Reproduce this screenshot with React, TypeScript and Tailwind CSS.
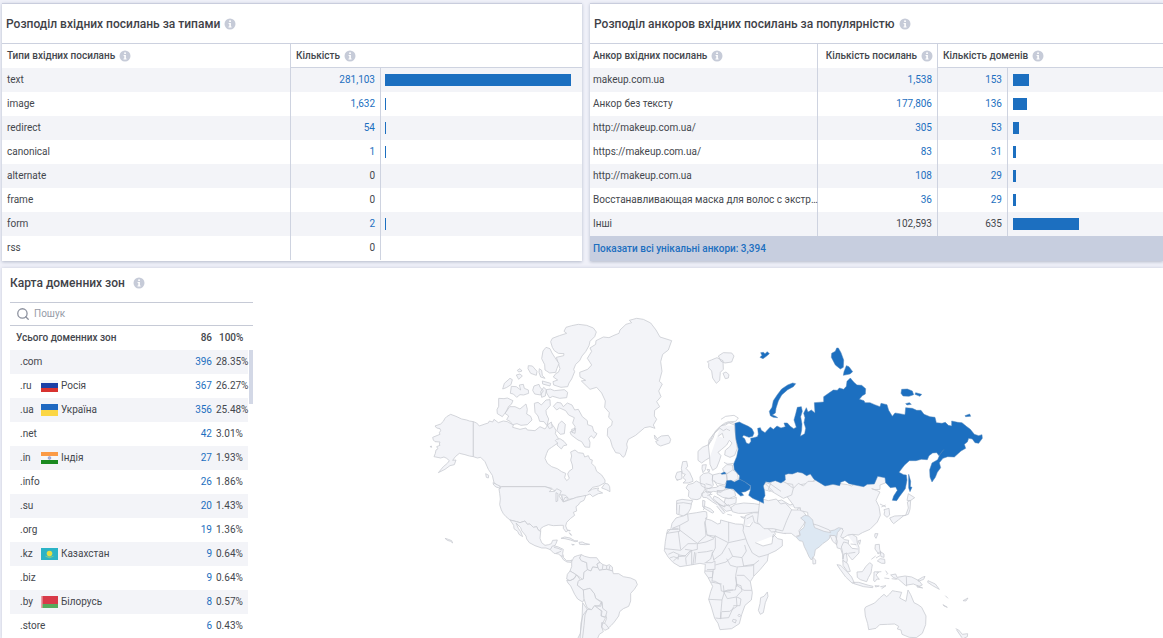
import { Search } from 'lucide-react';
import type { ReactNode } from 'react';

type LinkType = { name: string; count: number };
type Anchor = { name: string; links: number; domains: number; plain?: boolean };
type Zone = { zone: string; count: number; share: string; country?: string; flag?: string };

const linkTypes: LinkType[] = [
  { name: 'text', count: 281103 },
  { name: 'image', count: 1632 },
  { name: 'redirect', count: 54 },
  { name: 'canonical', count: 1 },
  { name: 'alternate', count: 0 },
  { name: 'frame', count: 0 },
  { name: 'form', count: 2 },
  { name: 'rss', count: 0 },
];

const anchors: Anchor[] = [
  { name: 'makeup.com.ua', links: 1538, domains: 153 },
  { name: 'Анкор без тексту', links: 177806, domains: 136 },
  { name: 'http://makeup.com.ua/', links: 305, domains: 53 },
  { name: 'https://makeup.com.ua/', links: 83, domains: 31 },
  { name: 'http://makeup.com.ua', links: 108, domains: 29 },
  { name: 'Восстанавливающая маска для волос с экстр…', links: 36, domains: 29 },
  { name: 'Інші', links: 102593, domains: 635, plain: true },
];

const zones: Zone[] = [
  { zone: '.com', count: 396, share: '28.35%' },
  { zone: '.ru', count: 367, share: '26.27%', country: 'Росія', flag: 'ru' },
  { zone: '.ua', count: 356, share: '25.48%', country: 'Україна', flag: 'ua' },
  { zone: '.net', count: 42, share: '3.01%' },
  { zone: '.in', count: 27, share: '1.93%', country: 'Індія', flag: 'in' },
  { zone: '.info', count: 26, share: '1.86%' },
  { zone: '.su', count: 20, share: '1.43%' },
  { zone: '.org', count: 19, share: '1.36%' },
  { zone: '.kz', count: 9, share: '0.64%', country: 'Казахстан', flag: 'kz' },
  { zone: '.biz', count: 9, share: '0.64%' },
  { zone: '.by', count: 8, share: '0.57%', country: 'Білорусь', flag: 'by' },
  { zone: '.store', count: 6, share: '0.43%' },
];

const BAR_SCALE = 1443;
const fmt = (n: number) => n.toLocaleString('en-US');

function Info() {
  return (
    <svg viewBox="0 0 12 12" className="h-3 w-3 shrink-0" aria-hidden="true">
      <circle cx="6" cy="6" r="5.5" fill="#c6cbd8" />
      <rect x="5.2" y="2.4" width="1.7" height="1.6" fill="#fff" />
      <path d="M4.6 5h2.3v3.6h.7v.9H4.5v-.9h.8V5.9h-.7z" fill="#fff" />
    </svg>
  );
}

function Flag({ code }: { code: string }) {
  return (
    <svg viewBox="0 0 17 12" className="h-3 w-[17px] shrink-0" aria-hidden="true">
      {code === 'ru' && (
        <>
          <rect width="17" height="4" fill="#f4f5f8" />
          <rect y="3" width="17" height="5" fill="#1b3fa6" />
          <rect y="8" width="17" height="4" fill="#d8322f" />
        </>
      )}
      {code === 'ua' && (
        <>
          <rect width="17" height="6" fill="#1f69c1" />
          <rect y="6" width="17" height="6" fill="#fbd644" />
        </>
      )}
      {code === 'in' && (
        <>
          <rect width="17" height="12" fill="#f6f7f8" />
          <rect width="17" height="4" fill="#fb9b46" />
          <rect y="8" width="17" height="4" fill="#1b8a20" />
          <circle cx="8.5" cy="6" r="1.4" fill="#a9b3dc" stroke="#7583c4" strokeWidth=".5" />
        </>
      )}
      {code === 'kz' && (
        <>
          <rect width="17" height="12" fill="#2bb3c6" />
          <circle cx="8.5" cy="5.6" r="2.8" fill="#e3dd45" />
          <path d="M4.5 8.2q4 3 8 0" fill="none" stroke="#9ccf72" strokeWidth=".8" />
        </>
      )}
      {code === 'by' && (
        <>
          <rect width="17" height="8" fill="#d83a49" />
          <rect y="8" width="17" height="4" fill="#55ab5c" />
          <rect width="1.6" height="12" fill="#e9a2a6" />
        </>
      )}
    </svg>
  );
}

function CardTitle({ children }: { children: ReactNode }) {
  return (
    <h2 className="flex h-10 items-center gap-1 border-b border-[#ccd1df] pl-1 text-[12px] font-medium text-[#3f4248]">
      {children}
      <Info />
    </h2>
  );
}

const Bar = ({ share }: { share: number }) => (
  <div className="h-3 min-w-px bg-[#1c6fc0]" style={{ width: `${share}%` }} />
);

const LABEL = 'flex items-center gap-1';
const LINE = 'border-l border-[#ced3e0]';

function LinkTypesCard() {
  return (
    <section className="border-t border-[#c9cddd] bg-white shadow-[0_1px_3px_#b4bacb]">
      <CardTitle>Розподіл вхідних посилань за типами</CardTitle>
      <table className="w-full table-fixed border-separate border-spacing-0">
        <colgroup>
          <col className="w-[288px]" />
          <col className="w-[90px]" />
          <col />
        </colgroup>
        <thead>
          <tr className="h-6 text-left">
            <th className="p-0 pl-[5px] font-medium">
              <span className={LABEL}>Типи вхідних посилань <Info /></span>
            </th>
            <th colSpan={2} className={`${LINE} border-b p-0 pl-[5px] font-medium`}>
              <span className={LABEL}>Кількість <Info /></span>
            </th>
          </tr>
        </thead>
        <tbody>
          {linkTypes.map((row) => (
            <tr key={row.name} className="h-6 odd:bg-[#f3f4f8]">
              <td className="p-0 pl-[5px]">{row.name}</td>
              <td className={`${LINE} p-0 pr-[5px] text-right`}>
                {row.count ? <a href="#links" className="text-[#1c6fc0]">{fmt(row.count)}</a> : '0'}
              </td>
              <td className={`${LINE} p-0 pr-[11px] pl-1`}>
                {row.count > 0 && <Bar share={(row.count / 281103) * 100} />}
              </td>
            </tr>
          ))}
        </tbody>
      </table>
    </section>
  );
}

function AnchorsCard() {
  return (
    <section className="border-t border-[#c9cddd] bg-white shadow-[0_1px_3px_#b4bacb]">
      <CardTitle>Розподіл анкоров вхідних посилань за популярністю</CardTitle>
      <table className="w-full table-fixed border-separate border-spacing-0">
        <colgroup>
          <col className="w-[227px]" />
          <col className="w-[120px]" />
          <col className="w-[70px]" />
          <col />
        </colgroup>
        <thead>
          <tr className="h-6 text-left">
            <th className="p-0 pl-[3px] font-medium">
              <span className={LABEL}>Анкор вхідних посилань <Info /></span>
            </th>
            <th className={`${LINE} p-0 pr-1 font-medium`}>
              <span className={`${LABEL} justify-end`}>Кількість посилань <Info /></span>
            </th>
            <th colSpan={2} className={`${LINE} border-b p-0 pl-[5px] font-medium`}>
              <span className={LABEL}>Кількість доменів <Info /></span>
            </th>
          </tr>
        </thead>
        <tbody>
          {anchors.map((row) => (
            <tr key={row.name} className="h-6 odd:bg-[#f3f4f8]">
              <td className="p-0 pl-[3px] whitespace-nowrap">{row.name}</td>
              <td className={`${LINE} p-0 pr-[5px] text-right`}>
                {row.plain ? fmt(row.links) : <a href="#links" className="text-[#1c6fc0]">{fmt(row.links)}</a>}
              </td>
              <td className={`${LINE} p-0 pr-[5px] text-right`}>
                {row.plain ? row.domains : <a href="#domains" className="text-[#1c6fc0]">{row.domains}</a>}
              </td>
              <td className={`${LINE} p-0 pl-[5px]`}>
                <Bar share={(row.domains / BAR_SCALE) * 100} />
              </td>
            </tr>
          ))}
        </tbody>
      </table>
      <a href="#anchors" className="flex h-[25px] items-center bg-[#c7cedf] pl-[3px] font-medium text-[#1c6fc0]">
        Показати всі унікальні анкори: 3,394
      </a>
    </section>
  );
}

/* Outlines are drawn on a grid three times finer than the page and grouped by region. */
const americas = [
  'M160 335L148 333 140 330 125 327 108 319 92 313 80 320 75 325 70 334 62 342 45 348 50 354 60 356 62 362 58 368 60 373 38 382 40 390 45 395 60 396 58 402 60 406 50 410 54 416 48 420 46 430 42 440 62 444 72 441 80 445 88 452 82 460 70 470 55 488 75 478 90 467 103 464 108 450 98 451 106 440 118 430 135 434 148 438 160 440Z',
  'M160 335L170 339 178 348 195 342 205 339 208 333 218 336 222 328 235 338 250 333 262 335 280 345 278 352 300 358 318 354 322 360 345 362 360 350 375 357 385 343 395 342 403 352 408 362 406 371 415 385 412 400 395 412 385 419 380 430 375 445 382 460 395 470 412 476 425 485 437 490 434 503 440 512 448 505 443 492 447 484 458 476 457 465 452 450 455 438 452 426 465 420 475 428 490 430 494 441 505 437 510 448 517 450 515 460 525 470 530 484 545 495 555 510 555 518 537 528 518 532 505 545 518 537 536 534 533 541 548 549 535 551 518 560 510 552 500 556 488 560 470 562 460 566 445 568 430 576 425 560 415 545 400 540 395 535 375 530 245 530 233 527 222 518 217 496 205 478 195 455 182 442 172 444 160 440Z',
  'M245 530L375 530 395 537 388 545 404 544 410 536 424 543 417 558 430 576 470 562 498 556 492 571 480 577 475 585 468 590 470 603 460 607 464 616 452 625 440 637 437 648 443 663 438 666 430 655 430 646 420 646 400 647 385 644 370 650 362 656 362 665 354 659 350 650 340 652 330 642 322 643 315 633 300 638 290 635 270 630 258 620 250 611 244 600 239 584 241 567 239 550 237 537Z',
  'M270 630L290 635 300 638 315 633 322 643 330 642 340 652 350 650 354 659 362 665 360 685 365 698 375 706 386 704 394 701 398 691 412 690 408 701 404 707 397 711 391 719 378 714 365 714 345 707 328 698 320 687 318 678 305 662 302 653 288 639 295 655 302 665 308 680 297 673 293 664 282 656 281 646Z',
  'M391 719L397 708 405 708 415 711 430 718 428 730 430 742 440 752 450 752 456 750 453 757 441 756 430 749 423 738 415 732 402 730Z M402 712l12 3 12 5M408 730l15-6M423 738h8',
  'M423 685l11-4 16 3 14 8 10 1-8 2-15-5-16-4zM477 697l10-1 8 4 14 3-13 1-17-1zM455 703l8 1-6 1zM443 660l8 2-4 1zM448 668l7 8-3-1zM75 685l10 3 10 4 3 7-6-5-10-3z',
  'M455 755L462 741 472 737 484 734 479 744 484 752 500 758 503 780 492 787 490 810 470 795 450 783 455 770Z',
  'M484 734L479 744 484 752 500 758 502 779 513 783 518 771 534 773 531 762 540 757 530 743 510 743 494 739Z',
  'M531 762L540 757 549 764 560 767 568 764 577 771 578 783 560 778 548 779 538 781 534 773ZM549 764l-2 14M560 767v12M570 767l-3 12',
  'M492 787L502 779 513 783 518 771 534 773 538 781 548 779 560 778 578 783 580 791 596 791 610 800 632 804 647 811 652 824 643 838 632 850 632 873 626 889 610 896 599 905 596 918 583 936 574 946 564 955 553 942 560 925 556 910 548 896 547 881 545 875 527 865 523 851 510 835 490 840 472 826 474 812 490 807Z',
  'M450 783L462 790 469 795 462 806 450 812 440 807 442 793ZM440 811l10 1 12-6 8-11 10 13-6 7-2 11 18 14 3 26-5 10-15-9-9-14-12-25-8-9z',
  'M490 840l20-5 13 16 4 14 18 13-3 11-18-2-9 12-13-5-5-12-5-16zM524 889l14-2 7-12 3 20 13 10-5 16-12-3 2-15z',
  'M502 898l13 1 9-12 20 16-1 15 14 5-8 15-4 13 5 14-12 8-6 14-52 2 3-50 5-22zM545 938l10 2 12 15-12 6-10-9zM488 878l14 20-7 17-3 32-5 43h-16l10-20 5-40z',
  'M555 520l9 2 5 8 1 15-11-6-14-5zM425 554l12 2 8 9-10-3-6 12zM408 548l6 3-1 22-5 2zM197 491l9 5-1 8-6-2zM219 518l20 10 2 7-13-4-7-6z',
];

const arctic = [
  'M440 70L432 64 438 52 455 47 475 43 500 46 520 54 529 66 524 80 510 94 507 107 497 125 486 138 479 152 467 163 461 178 464 185 455 207 447 219 443 230 423 232 401 225 399 215 413 210 400 201 408 190 415 187 420 176 414 157 409 142 431 137 432 131 415 130 403 122 397 112 392 95 397 85 418 77Z',
  'M378 112l12 4 6 13 9 14 12 18-6 14-4 12-18 2-14-9-1-16-9-18 4-23zM325 167l12 1 14 16-2 12-17-6-8-14zM358 176l7 5 2 15 8 9-13-4-5-14zM367 213l25 7-2 8-22-6zM379 239l12-2 12 5 30-3 10 8-3 16-21 2-21-6-9 5-9-15zM342 228l15-5 3 9 10 10-8 13-18-3-6-11zM362 245l9-13 8 7-3 19-11 4zM289 195l11-3 7 6-11 10zM292 181l8-5 6 7-10 3zM270 205l7 4-4 15-14 9-11 4 5-17zM274 229l15 1 13 10-4-15 12-2 3 12 12 5 1 10-15 5-11-1-10 8-10-10-9-2z',
  'M236 265l16 1 10-2 17 8-5 11-8 6-7 15-12 16-15-9-1-12 5-10zM269 290l16 0 15 7 18-15 4 16-2 14 12 7 4 11-14 14-19 2-12-5-13 3-8-10-10-5 6-11-11-8zM343 280l11-3 10 8 14-15 12-1 1 17-13 15 1 11 7 15-5 20-9-12-13-1-5-16-9-11zM400 289l11-12 12 2 7 11 12-11 14 6 8 15 11-2 12 22 15 12 1 12 14 5 4 15 10 7-9 14-9-8-7 9 4 11-1 15-14-1-10-16-11-5-20-15-4-9 13-5 2-12-7-10 5-16-17-8-9-13-18-8-9 6-8-9zM425 333l11 10-3 28-12 2-10-11 5-20zM455 358l12-3-2 15-9-3zM410 388l10-2 12 8 9 11-10 2-7 10-13-12 2-6-7-7zM382 345l12-9 3 16-9 4z',
  'M582 76L597 70 600 60 618 43 635 38 628 31 650 25 670 28 692 39 708 60 720 81 755 92 745 120 728 133 722 155 726 184 718 214 727 222 716 243 723 260 710 275 719 290 704 301 703 318 710 328 700 345 705 355 690 350 674 353 647 376 625 388 620 402 622 413 615 437 609 442 599 430 587 428 577 410 571 389 562 377 563 355 575 346 577 333 566 322 568 308 554 292 556 273 545 249 530 232 510 238 484 213 497 211 480 201 479 187 503 178 515 165 502 145 515 124 510 114 527 103 528 92 550 81 567 83Z',
  'M703 375l9 11 12-8 21-2 7 12-3 11-27 9-10-5-5-9 8-3-10-4zM862 155l12-5 17-7 18 9 1 26-9 9-2 24-10 9-5-7-6-9-3-21-9-10 0-13zM895 138l15-10 25 1 7 9-7 18-20 3-12-5zM909 190l9-4 9 8-2 10-9 2zM30 410l4-2 1 4z',
];

const europe = [
  'M345 250L336 247 325 245 313 250 303 258 292 268 280 283 267 300 265 314 247 322 234 334 234 361 245 369 256 361 269 353 270 373 278 391 290 383 298 363 303 347 294 337 305 328 320 315 328 301 336 309 329 320 316 331 314 345 330 352 344 346 352 325 348 297 345 270ZM300 265l10 7 9-5 11 5M294 289l13-9 4 14M303 258l22-10 21 8M269 353l-4-38 15-32 20-18',
  'M303 238l14-9 25-3 13 8-8 10-15 1-15 10-13 1-18 18-7 20-15 24',
  'M188 365l12-1 3 15-5 6 11 12 9 20 1 7-14 5-16 0 9-8-9-8 7-10-9-3-3-15zM171 397l14-3 1 22-15 5-5-10zM247 375l12-1-3 15-7 9-3-12zM261 388l8 1-2 8zM308 386l12-12 17 1 3 18-9 8-19-2zM312 367l11 6 17-3',
  'M204 434l15-4 10-7 13 7 13 4 0 14-8 12-6 15-10 4-17-2-9-8 2-16-9-9zM240 410l10-9 15-3 13 7-1 16 3 15-10 10-14-2-12-7-3-10zM278 405l20-5 21 2 2 20-7 13-22-5-15-9zM320 402l18-12 14 8 3 18-14 8-19-2zM256 448l15-4 18-2 10-6 16 3 1 8-14 10-21-3-20 5zM245 461l15-8 14 4-6 9 14 17 17 10-4 3-17-10-18-13-11-1zM293 452l18-1 20-6 13 9 3 14-21 8-18-4-17-10zM283 468l13 6 20 16-2 11-14-7-21-18zM316 474l21 2 12-4-1 17-24 9-11-11zM248 481l7 2-2 22-5-5zM170 482l16-4 32 4-8 18-7 10h-33zM297 493l15 6 14-5 10 16-17 4-11-9z',
  'M170 420l5-1m82 12l18 5m7-15l12 20m-4 10l12 4m-40 11l15-3',
];

const russia = [
  'M-135 250L-122 246 -112 251 -95 259 -84 266 -78 279 -82 289 -93 292 -109 286 -113 291 -106 296 -101 309 -93 312 -87 304 -88 295 -79 293 -68 290 -65 283 -67 265 -59 263 -56 271 -45 278 -37 269 -29 261 -20 268 -9 258 3 264 16 260 12 249 22 249 31 259 41 266 49 262 42 240 47 222 52 202 64 200 67 214 62 230 66 252 65 270 61 289 74 281 77 265 72 248 75 233 71 220 79 203 84 216 94 210 105 219 103 188 131 186 131 170 150 157 160 150 172 151 178 144 191 148 199 139 201 124 211 114 221 126 231 135 245 136 257 146 256 162 247 167 238 178 252 182 255 188 270 188 284 194 300 200 303 190 321 194 326 211 337 229 345 219 359 221 375 224 377 203 397 205 410 211 423 211 432 223 450 230 465 232 469 248 486 250 496 247 505 256 515 258 515 243 533 247 546 248 559 259 571 268 583 283 596 287 606 284 607 295 596 310 585 308 577 297 566 295 562 306 553 313 557 325 543 333 523 351 503 350 489 355 478 368 482 383 472 397 466 412 456 426 450 411 449 389 456 369 473 359 480 343 491 329 477 347 470 338 458 339 447 347 442 359 424 358 408 362 388 362 373 376 357 397 371 404 379 405 381 420 376 446 358 470 350 482 337 481 341 468 352 451 347 441 331 443 317 428 315 413 293 409 283 432 262 433 251 440 229 436 207 431 195 422 182 427 179 437 159 433 135 438 114 425 102 418 91 402 80 407 67 399 53 396 37 402 25 401 15 404 16 420 3 429 -14 422 -31 427 -43 425 -50 438 -46 455 -45 467 -50 476 -49 490 -65 482 -82 475 -94 466 -89 451 -88 437 -105 426 -122 417 -121 407 -137 389 -139 372 -130 350 -125 327 -132 298 -134 275Z',
  'M-160 422L-147 421 -137 426 -121 418 -105 426 -89 438 -91 448 -104 455 -116 457 -109 466 -118 468 -129 458 -140 447 -164 444Z',
  'M47 131l-7 9-17 9-18 16-10 18-7 22-2 14-9 6 10 4 6 4-13-1-9-5-3-13 8-12 4-20 12-18 13-17 18-12 15-6z',
  'M175 24l8 14 8 22-1 22-9 5-15-12-12-23 1-12 11-6 4-10zM199 77l8 3 11 15-8 7-20 4 2-11zM365 148l17-1 15 6 4 11-14 5-18-1-6-8zM407 158l18 5-5 6-15-6zM377 191l11-3 6 5-13 2zM555 227l14-5 3 7-15 1zM-58 38l8-1 5 4 7-6 6 6-9 8-10 7-9-4 6-6zM386 403l6 21-1 16 5 2-6 13-4-11zM-176 400l10-4 4 5-13 2z',
];

const africa = [
  'M80 10l20-2 24 4-2 13-8 14-14 9-20-6zM89 15l-2 27',
  'M78 54L88 51 100 48 113 42 140 38 162 34 170 36 171 50 166 56 184 61 203 72 211 70 212 60 234 66 257 72 278 73 282 87 290 110 303 132 312 151 323 161 355 162 352 183 331 208 311 229 301 245 307 278 304 300 285 316 275 344 268 371 245 386 210 389 204 370 194 355 184 321 176 298 182 275 188 259 174 232 164 218 165 208 166 193 150 190 122 195 90 200 70 188 55 172 43 152 46 124 50 101 63 85 66 70Z',
  'M113 42l2 20-26 14-22 9M67 85l18 0M85 87l57 43 26-23-4-38 7-18M89 76l0 18-39 6M50 101l3-12 32-1M85 95l7 54M45 146l47 5 22-20 26 0M165 64l6 41 21 9 4-8M236 66l0 59M171 105l27 4 37 19 60-13M196 112l0 32-9 17 5 20M192 116l-24 10-26 5 0 17-22 5-15 15-20 2-15 13M105 148l20 3-18 23 2 20M125 150l0 44M134 156l-5 38M143 158l27-3 18-4M135 190l3-32M188 155l-6 22-14 10M164 188l22 0 9-5 0 25-24 1M190 180l25-18 20-34M196 195l32-9 20-17-12-25M248 169l28 4 13-20-5-18M230 176l11 20 19 5 23-2 24-2 20-16M276 173l5 25 30-5 0 35M262 202l-5 24 3 35M165 213l24 1-2 18-13 2M190 207l-4 36 10 1 16 10 2 19 28 4M182 246l33 6M260 226l22 0 19 19M257 231l4 25 21 15 23 0M220 256l2 18 12-4 22 0 3-17 14 4 3 17M176 298l40 2 8-26 25-4M216 300l-3 34 0 22-17-2M216 335l23-1 22-15-2-28-27 5-12-22M259 290l16-17M261 291l12 6-3 20-20 0M249 358l10 2-3 9-9-5zM268 342l4 5-4 4-4-5zM213 335l-2 20 25-2 15-33M84 179l2-14 22 3M55 163l15-7 18 8M59 174l12-4 14 5',
  'M352 276l2 13-8 19-6 30-9 5-6-12 5-20 2-18 10-4z',
  'M243 22l13-9 25-4 32 2 23 4 6 13-10 8-24 1-22 3-21 0-18-5zM272 50l13 2-4 3zM161 18l20 8 11 10-5 3-24-14zM232 43l14 3M203 10l22 27-5 5-20-24M160 30l3-6',
  'M286 47l15-6 10-3 20 1 7 15 22 36 12-3 4 16-8 9 2-9 13 13 14 3 0 19-19 14-26 12-25 7-20-12-15-30-13-37z M290 57l18-10 5 20 26 10M316 128l23 10 27-7 3-23M286 78l13 2 9-13',
  'M336 40l20-4 12 10 20-9 12 5 6 17 4 25-3 17-22-7-20 2-16-15-13-23zM400 43l20-1 20-9 5 25-15 15-9 19-15 4M370 10l20 10 25 17 15-2M373 5l22-5 25 15 14-4 16 17M440 33l10-18',
];

const india =
  'M62 114L74 106 86 108 98 120 100 132 120 144 145 154 163 150 176 143 188 146 185 157 176 166 168 177 162 168 150 166 148 176 140 183 128 191 119 200 106 209 103 227 94 240 87 230 80 214 73 200 68 184 58 182 49 172 61 166 58 154 72 142 76 126Z';

const asia = [
  'M-20 95L10 88 42 90 66 90 80 108 72 132 57 152 60 165 46 170 34 160 10 160 -12 156Z',
  'M-130 -20L-122 -15 -110 2 -90 6 -60 25 -30 34 0 16 15 24 20 40 56 15 96 8 134 -38 112 -46 91 -69 55 -75 15 -70 -20 -45 -50 -40 -50 -20 -65 -25Z',
  'M-15 2L-2 -5 18 10 38 13 40 25 55 10 70 18 84 4 103 4 114 -15 128 -29 137 -34 133 -24 144 -6 162 -1 175 10 203 14 215 18 240 0 240 -16 261 -20 283 -30 283 -41 294 -76 314 -72 319 -51 335 -40 351 -27 336 -14 324 -8 318 8 300 15 300 28 285 29 275 26 289 31 300 36 294 48 288 61 297 80 301 106 292 126 270 148 247 158 235 165 218 163 202 166 193 172 178 177 176 150 163 152 145 158 104 145 96 132 85 121 83 97 62 92 61 83 44 84 40 75Z',
  'M144 -6L160 -18 190 -25 215 -9 240 -16 258 -25 263 -43 240 -28 195 -48 160 -43 135 -38Z',
  india,
  'M100 132l14 4 34 14 4 8-20-4-28-11zM150 166l16 1 6 17-2 10-12-10zM172 158l12-14 6 8-8 18 12 9 12 2-2 13-8 5 3 21 3 20-6 24-7-19-1-21-6-18-10-2-4-18z',
  'M203 166l13-3 14 8 2 18 5 13 0 17-20 21-8-9-8-12-9 3-3 15 0-15-5-21 7-15 12 3 13 16 18 2M212 192l17 2M205 220l21-3M189 241l14 10 8 23-8 2-14-20z',
  'M-60 55l25 7 24-5 13 15 14-3 19 20-15 33-12 31-28-7-28 0-20-20zM-20 -10l40 20 20 15-5 20-25 10-25-15-20-12zM-75 20l30-10 25 25M-65 0l38 13 30 21',
  'M312 89l15-4 2 20-8 7-9-8 2-9zM304 81l13-6M300 72l18 9M329 114l15-6 20-1 13-1 8-22-3-18 10-5-2 27-5 15-15 5-15 12-14 11-5-5zM381 61l4-20 19 12-13 9zM285 161l9 0-6 14-4-6zM234 183l8-3-3 13zM98 232l9 8 0 11-8 1z',
  'M171 254l11 2 21 21 12 14 8 18-6 1-20-19-16-22zM218 307l18 0 30 9 13 3-1 4-27-3-29-9zM231 276l16-1 11-16 11-11 8 6-2 12-2 13-8 14-5 12-19-6-9-7zM282 276l4-1 10 2-8 8 10 13-7-1-6 8-4-3 1-17zM304 275l-14 1M317 272l6 9-3 3M313 294l15 2M285 317l13 1-11 3zM301 320l17-3-13 9M286 194l12-1 1 15 4 12-10-2-8-11zM288 234l12-7M274 238l13-10M291 219l7 3M300 214l12 8 0 10-9-2zM292 243l8-7 14 2 1 12-10 0z',
  'M332 285l15-3 4 10 24-4 20 3 22 11 10 13-10 4-17-7-24 4-20-18-15-5zM379 290l1 29M414 300l13-8 8-3-4 9-16 6zM335 296l15 2M412 317l16 7-17-3zM444 302l22 10 12 16-20-11-15-10zM496 347l8 8M489 374l13 8-10-4zM549 362l15-8-6 9z',
  'M254 387L257 381 284 369 299 354 312 343 320 350 329 342 337 332 347 334 365 337 359 354 378 364 384 330 392 344 402 368 414 374 425 382 438 408 437 434 427 460 409 473 388 472 366 463 363 450 352 447 356 439 344 432 322 433 299 434 288 445 266 449 263 431 256 408Z',
  'M527 446l9 4 11 13 16-2-1 9-17 8M530 450l12 17 4 6',
];

function WorldMap() {
  return (
    <svg viewBox="253 268 910 370" className="min-w-0 flex-1" role="img" aria-label="Карта доменних зон">
      <g fill="#f3f4f8" stroke="#c9cbd2" strokeWidth="2.4" strokeLinejoin="round">
        <g transform="translate(420 310) scale(.33333)">
          {[...americas, ...arctic].map((d) => <path key={d} d={d} />)}
        </g>
        <g transform="translate(620 340) scale(.33333)">
          {europe.map((d, i) => <path key={d} d={d} fill={i === 1 || i === 4 ? 'none' : undefined} />)}
        </g>
        <g transform="translate(650 500) scale(.33333)">
          {africa.map((d, i) => <path key={d} d={d} fill={i === 2 ? 'none' : undefined} />)}
        </g>
        <g transform="translate(780 480) scale(.33333)">
          {asia.map((d) => <path key={d} d={d} fill={d === india ? '#dde8f3' : undefined} />)}
        </g>
        <g transform="translate(780 340) scale(.33333)" fill="#1c6fc0" stroke="#4d83ba" strokeWidth="1.5">
          {russia.map((d) => <path key={d} d={d} />)}
        </g>
      </g>
    </svg>
  );
}

function ZonesCard() {
  return (
    <section className="ml-0.5 flex items-start bg-white shadow-[0_0_3px_#c4c9d8]">
      <div className="w-[251px] shrink-0 pl-2">
        <h2 className="flex h-[34px] items-center gap-2 pb-1 text-[12px] font-medium text-[#3f4248]">
          Карта доменних зон <Info />
        </h2>
        <label className="flex h-6 items-center gap-1 border-y border-[#c6cad6] pl-1.5">
          <Search size={14} color="#8d929f" strokeWidth={2.2} className="shrink-0" />
          <input type="search" aria-label="Пошук" placeholder="Пошук" className="w-full min-w-0 bg-transparent outline-none placeholder:text-[#969ba7]" />
        </label>
        <div className="flex items-start">
          <table className="w-[238px] table-fixed border-separate border-spacing-0">
            <colgroup>
              <col className="w-[31px]" />
              <col />
              <col className="w-[28px]" />
              <col className="w-[36px]" />
            </colgroup>
            <thead>
              <tr className="h-6 text-left">
                <th colSpan={2} className="p-0 pl-1.5 font-medium">Усього доменних зон</th>
                <th className="p-0 text-right font-medium">86</th>
                <th className="p-0 pl-[7px] font-medium">100%</th>
              </tr>
            </thead>
            <tbody>
              {zones.map((z) => (
                <tr key={z.zone} className="h-6 odd:bg-[#f3f4f8]">
                  <td className="overflow-visible p-0 pl-2.5 whitespace-nowrap">{z.zone}</td>
                  <td className="p-0">
                    {z.flag && <span className="flex items-center gap-[3px]"><Flag code={z.flag} />{z.country}</span>}
                  </td>
                  <td className="p-0 text-right"><a href="#zone" className="text-[#1c6fc0]">{z.count}</a></td>
                  <td className="p-0 pl-1">{z.share}</td>
                </tr>
              ))}
            </tbody>
          </table>
          <div className="mt-6 ml-px h-[54px] w-1 bg-[#d3d8e6]" />
        </div>
      </div>
      <WorldMap />
    </section>
  );
}

export default function App() {
  return (
    <main className="flex min-h-screen flex-col gap-[7px] overflow-hidden bg-[#eff0f8] pt-[3px] font-[Roboto,sans-serif] text-[10px] leading-4 text-[#44474d]">
      <div className="grid grid-cols-[580fr_573fr] gap-2 pl-0.5">
        <LinkTypesCard />
        <AnchorsCard />
      </div>
      <ZonesCard />
    </main>
  );
}
